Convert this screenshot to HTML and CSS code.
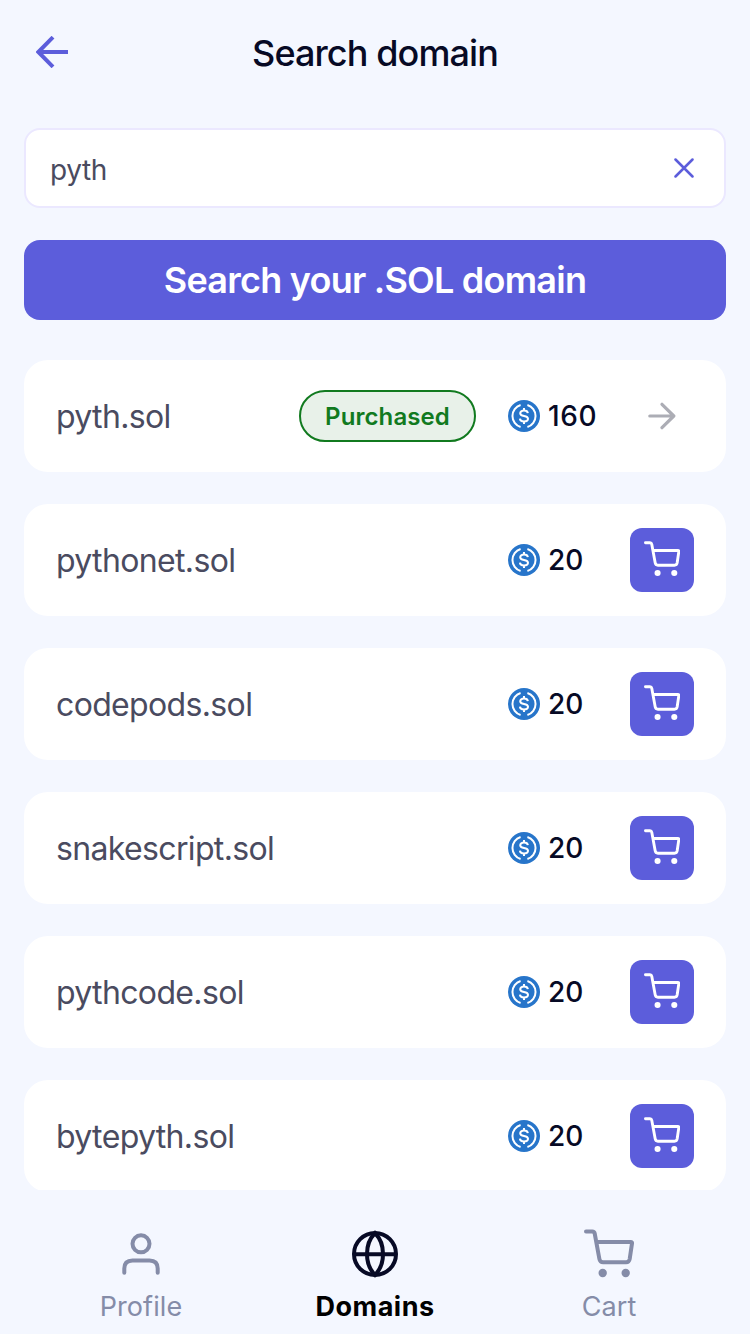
FILE: index.html
```html
<!DOCTYPE html>
<html lang="en">
<head>
<meta charset="utf-8">
<title>Search domain</title>
<link rel="stylesheet" href="styles.css">
</head>
<body>
<svg class="sprite" aria-hidden="true">
  <symbol id="cart" viewBox="0 0 50 50">
    <path d="M2 2.5H8.3Q10.3 2.5 10.7 4.5L15.4 30Q16 33.3 19.2 33.3H42Q45.1 33.3 45.7 30L48 14.4Q48.2 13 46.8 13H12.5" fill="none" stroke="currentColor" stroke-width="4" stroke-linecap="round" stroke-linejoin="round"/>
    <circle cx="18.7" cy="44" r="4.2" fill="currentColor"/>
    <circle cx="41.7" cy="44" r="4.2" fill="currentColor"/>
  </symbol>
  <symbol id="usdc" viewBox="0 0 32 32">
    <circle cx="16" cy="16" r="16" fill="#2775ca"/>
    <path d="M12.6 5A11.5 11.5 0 0 0 12.6 27M19.4 5A11.5 11.5 0 0 1 19.4 27" fill="none" stroke="#fff" stroke-width="2"/>
    <path d="M16 8V10.7M16 21.3V24M19.9 13.2C19.6 11.5 18.2 10.6 16 10.6C13.7 10.6 12.2 11.7 12.2 13.3C12.2 15 13.5 15.6 16 16C18.6 16.4 20 17.1 20 18.8C20 20.4 18.4 21.5 16 21.5C13.6 21.5 12.1 20.5 11.9 18.6" fill="none" stroke="#fff" stroke-width="2"/>
  </symbol>
</svg>
<div class="screen">
  <header class="header">
    <svg class="back" viewBox="0 0 32 32"><path d="M32 16H3M17 1.2L2.3 16L17 30.8" fill="none" stroke="currentColor" stroke-width="4"/></svg>
    <h1 class="title">Search domain</h1>
  </header>
  <main class="content">
    <div class="field">
      <span class="query">pyth</span>
      <svg class="clear" viewBox="0 0 20 20"><path d="M1.5 1.5L18.5 18.5M18.5 1.5L1.5 18.5" fill="none" stroke="currentColor" stroke-width="2.5" stroke-linecap="round"/></svg>
    </div>
    <button class="search">Search your .SOL domain</button>
    <div class="results">
      <div class="card">
        <span class="name">pyth.sol</span>
        <span class="badge">Purchased</span>
        <span class="price wide"><svg class="coin"><use href="#usdc"/></svg>160</span>
        <span class="open"><svg class="arrow" viewBox="0 0 28 28"><path d="M1.8 14H25M14 2.3L25.8 14L14 25.7" fill="none" stroke="currentColor" stroke-width="3.2" stroke-linecap="round" stroke-linejoin="round"/></svg></span>
      </div>
      <div class="card">
        <span class="name">pythonet.sol</span>
        <span class="price"><svg class="coin"><use href="#usdc"/></svg>20</span>
        <span class="add"><svg class="add-icon"><use href="#cart"/></svg></span>
      </div>
      <div class="card">
        <span class="name">codepods.sol</span>
        <span class="price"><svg class="coin"><use href="#usdc"/></svg>20</span>
        <span class="add"><svg class="add-icon"><use href="#cart"/></svg></span>
      </div>
      <div class="card">
        <span class="name">snakescript.sol</span>
        <span class="price"><svg class="coin"><use href="#usdc"/></svg>20</span>
        <span class="add"><svg class="add-icon"><use href="#cart"/></svg></span>
      </div>
      <div class="card">
        <span class="name">pythcode.sol</span>
        <span class="price"><svg class="coin"><use href="#usdc"/></svg>20</span>
        <span class="add"><svg class="add-icon"><use href="#cart"/></svg></span>
      </div>
      <div class="card">
        <span class="name">bytepyth.sol</span>
        <span class="price"><svg class="coin"><use href="#usdc"/></svg>20</span>
        <span class="add"><svg class="add-icon"><use href="#cart"/></svg></span>
      </div>
    </div>
  </main>
  <nav class="tabs">
    <div class="tab">
      <svg class="tab-icon" viewBox="0 0 50 50"><g fill="none" stroke="currentColor" stroke-width="4" stroke-linecap="round"><circle cx="25" cy="14.8" r="8.5"/><path d="M8.3 43.8V39.5Q8.3 31.4 16.5 31.4H33.5Q41.7 31.4 41.7 39.5V43.8"/></g></svg>
      <span class="label">Profile</span>
    </div>
    <div class="tab active">
      <svg class="tab-icon" viewBox="0 0 50 50"><g fill="none" stroke="#070a25" stroke-width="4"><circle cx="25" cy="25" r="21"/><path d="M4 25.2H46M25 4C14.3 15 14.3 35 25 46C35.7 35 35.7 15 25 4Z"/></g></svg>
      <span class="label">Domains</span>
    </div>
    <div class="tab">
      <svg class="tab-icon"><use href="#cart"/></svg>
      <span class="label">Cart</span>
    </div>
  </nav>
</div>
</body>
</html>
```
FILE: styles.css
```css
* { box-sizing: border-box; }
body {
  margin: 0;
  background: #f4f7ff;
  font-family: Inter, "Liberation Sans", sans-serif;
  color: #070a25;
}
svg { display: block; flex: none; }
.sprite { display: none; }
.screen {
  display: flex;
  flex-direction: column;
  width: 750px;
  height: 1334px;
  overflow: hidden;
}
.header {
  display: grid;
  grid-template-columns: 32px 1fr 32px;
  align-items: center;
  height: 104px;
  flex: none;
  padding: 0 36px;
}
.back { width: 32px; height: 32px; color: #5c5ddb; }
.title {
  margin: 0;
  padding-top: 2px;
  text-align: center;
  font-size: 36px;
  line-height: 44px;
  font-weight: 500;
  letter-spacing: -0.9px;
}
.content {
  flex: none;
  height: 1086px;
  padding: 24px 24px 0;
  overflow: hidden;
}
.field {
  display: flex;
  align-items: center;
  justify-content: space-between;
  height: 80px;
  padding: 0 30px 0 24px;
  border: 2px solid #ebe8ff;
  border-radius: 16px;
  background: #fff;
}
.query { padding-top: 3px; font-size: 28px; line-height: 34px; letter-spacing: -0.4px; color: #4a4b60; }
.clear { width: 20px; height: 20px; color: #5c5ddb; }
.search {
  display: block;
  width: 100%;
  height: 80px;
  margin: 32px 0 40px;
  padding: 0;
  border: 0;
  border-radius: 16px;
  background: #5c5ddb;
  color: #fff;
  font: 600 36px/44px Inter, "Liberation Sans", sans-serif;
  letter-spacing: -0.77px;
}
.results { display: flex; flex-direction: column; gap: 32px; }
.card {
  display: flex;
  align-items: center;
  height: 112px;
  flex: none;
  padding: 0 32px;
  border-radius: 24px;
  background: #fff;
}
.name {
  flex: 1;
  padding-top: 2px;
  font-size: 32px;
  line-height: 38px;
  letter-spacing: -0.65px;
  color: #4a4b60;
}
.badge {
  display: flex;
  align-items: center;
  justify-content: center;
  width: 177px;
  height: 52px;
  margin-right: 32px;
  border: 2px solid #117a1f;
  border-radius: 26px;
  background: #e8f1e9;
  color: #117a1f;
  font-size: 24px;
  font-weight: 600;
  letter-spacing: 0.1px;
}
.price {
  display: flex;
  align-items: center;
  gap: 8px;
  width: 122px;
  font-size: 28px;
  line-height: 34px;
  font-weight: 500;
}
.wide { letter-spacing: 0.6px; }
.coin { width: 32px; height: 32px; }
.add, .open {
  display: flex;
  align-items: center;
  justify-content: center;
  width: 64px;
  height: 64px;
}
.add { border-radius: 12px; background: #5c5ddb; color: #fff; }
.add-icon { width: 36.3px; height: 36.3px; margin-bottom: 1px; }
.arrow { width: 28px; height: 28px; color: #acadb5; }
.tabs {
  display: grid;
  grid-template-columns: repeat(3, 1fr);
  flex: 1;
  padding: 39px 24px 0;
}
.tab {
  display: flex;
  flex-direction: column;
  align-items: center;
  gap: 10px;
  color: #858ca8;
}
.tab-icon { width: 50px; height: 50px; }
.label { font-size: 27px; line-height: 35px; letter-spacing: 0.1px; }
.active .label { color: #000; font-weight: 700; letter-spacing: 0.5px; }
```
